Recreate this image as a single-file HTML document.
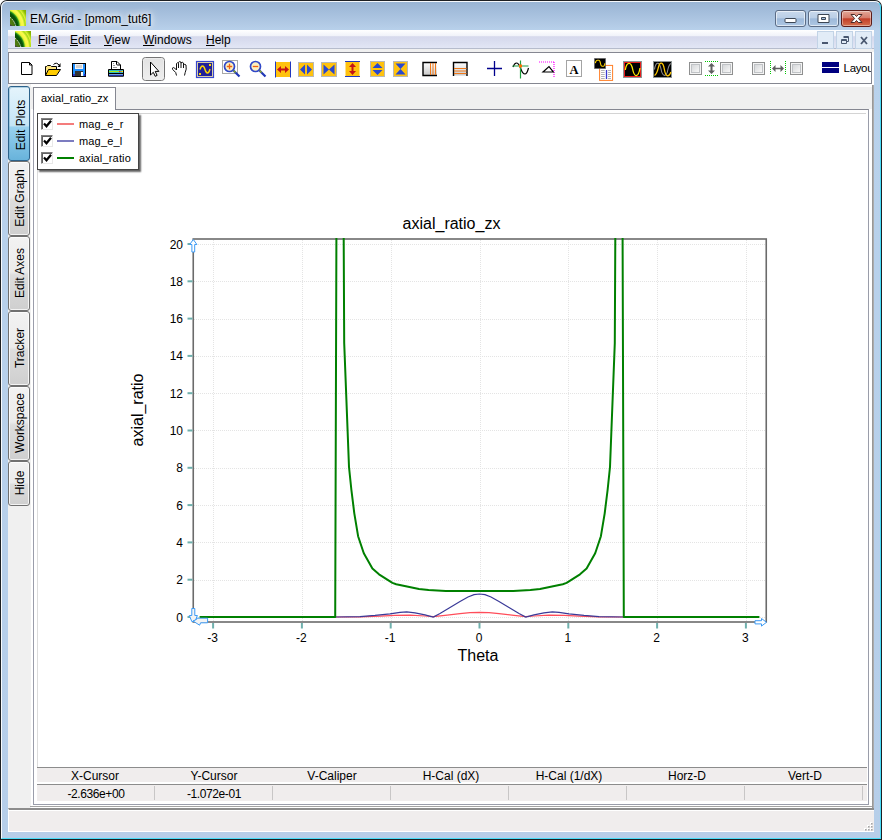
<!DOCTYPE html>
<html><head><meta charset="utf-8"><title>EM.Grid - [pmom_tut6]</title>
<style>
*{box-sizing:border-box;margin:0;padding:0}
html,body{width:882px;height:840px;overflow:hidden}
html{background:#fff}
body{position:relative;background:#fff;font-family:"Liberation Sans",sans-serif;font-size:12px;color:#000}
.abs{position:absolute}
#frame{left:0;top:0;width:882px;height:840px;border-radius:7px 7px 0 0;background:#1d2023}
#glass{left:1px;top:1px;width:880px;height:838px;border-radius:6px 6px 0 0;
 background:linear-gradient(180deg,#98b4d3 0px,#a3bddb 10px,#b3cbe6 24px,#b9d2ec 30px,#b6cee9 100%)}
#glow{left:1px;top:1px;width:880px;height:838px;border-radius:6px 6px 0 0;border:1px solid rgba(255,255,255,.9);border-top-color:rgba(255,255,255,.9);border-right-color:#48dcf8;border-bottom-color:#48dcf8}
#title{left:30px;top:12px;font-size:12px;line-height:15px;white-space:nowrap;text-shadow:0 0 5px #fff,0 0 9px #fff,0 0 12px #fff}
#menubar{left:8px;top:30px;width:866px;height:19px;border-bottom:1px solid #b6bccc;
 background:linear-gradient(180deg,#ffffff 0,#f0f2f9 33%,#d6d9ec 37%,#d9ddef 60%,#e2e6f5 100%)}
.mi{top:33px;font-size:12px;line-height:14px;white-space:nowrap}
#client{left:8px;top:49px;width:866px;height:783px;background:#fff}
#toolbar{left:8px;top:52px;width:864px;height:32px;background:#fff;border:1px solid #858791}
#tabstrip{left:31px;top:87px;width:841px;height:22px;background:#f0f0f0}
#sidestrip{left:8px;top:84px;width:23px;height:724px;background:#f0f0f0}
#rshadow{left:872px;top:85px;width:2px;height:747px;background:linear-gradient(90deg,#8f8f8f,#b4b4b4)}
#content{left:33px;top:109px;width:836px;height:696px;background:#fff;border:1px solid #9a9daa;border-top-color:#858791}
#inner{left:37px;top:113px;width:829px;height:655px;border-top:1px solid #d4d4d4;border-left:1px solid #dcdcdc}
#tab{left:33px;top:87px;width:83px;height:23px;background:#fff;border:1px solid #858791;border-bottom:none}
#tab span{position:absolute;left:7px;top:4px;font-size:11px;line-height:13px;white-space:nowrap}
.vt{left:8px;width:22px;border:1px solid #707070;border-radius:3px;background:linear-gradient(180deg,#f2f2f2 0,#ebebeb 48%,#dddddd 52%,#cfcfcf 100%);box-shadow:inset 0 0 0 1px rgba(255,255,255,.75)}
.vt.sel{border-color:#2c628b;background:linear-gradient(180deg,#e5f4fc 0,#c4e5f6 53%,#98d1ef 55%,#68b3db 100%);box-shadow:inset 1px 1px 0 0 rgba(120,170,200,.5)}
.vt.sel span{left:calc(50% + 1.5px);top:calc(50% + 1px)}
.vt span{position:absolute;left:calc(50% + .5px);top:calc(50% - 1px);font-size:12px;line-height:14px;white-space:nowrap;transform:translate(-50%,-50%) rotate(-90deg)}
#legend{left:37px;top:113px;width:102px;height:57px;background:#fff;border:1px solid #444;box-shadow:2px 2px 1.5px rgba(0,0,0,.6)}
.cb{left:41px;width:12px;height:12px;background:#fff;border:1px solid #808080;border-right-color:#e8e8e8;border-bottom-color:#e8e8e8;box-shadow:inset 1px 1px 0 #606060}
.ll{left:57px;width:17px;height:2px}
.lt{left:79px;font-size:11px;line-height:13px;white-space:nowrap;letter-spacing:.17px}
#hdr{left:37px;top:767px;width:830px;height:17px;border-top:1px solid #8c8c8c;background:linear-gradient(180deg,#f0eded 0,#f0eded 14px,#fff 14px)}
#vals{left:37px;top:784px;width:830px;height:17px;border-top:1px solid #8c8c8c;background:#f0eded}
.hc{top:769px;width:118px;text-align:center;font-size:12px;line-height:14px;white-space:nowrap}
.vc{top:787px;width:118px;text-align:center;font-size:12px;line-height:14px;white-space:nowrap;letter-spacing:-0.4px}
.sep{top:786px;width:1px;height:14px;background:#c8c6c6}
#status{left:8px;top:808px;width:866px;height:24px;background:#f0eded;border-top:2px solid #8c8c8c;border-left:1px solid #fff;border-bottom:1px solid #fff;box-shadow:inset 0 1px 0 #fff}
#stsh{left:30px;top:806px;width:842px;height:1px;background:#a4a4a4}
.cbtn{top:10px;height:17px;border:1px solid #5b6c86;border-radius:3px;box-shadow:inset 0 0 0 1px rgba(255,255,255,.6);
 background:linear-gradient(180deg,#c9d9ec 0,#bacee6 46%,#9db9da 52%,#aec7e3 100%)}
#bclose{background:linear-gradient(180deg,#e3a899 0,#d67c6b 46%,#c23e28 52%,#d4714f 100%);border-color:#5c1c19;box-shadow:inset 0 0 0 1px rgba(255,255,255,.4)}
.mbtn{top:31px;width:17px;height:18px;border:1px solid #c2d3e6;background:#e2ecf7}
</style></head><body>
<div id="frame" class="abs"></div>
<div id="glass" class="abs"></div>
<div id="glow" class="abs"></div>
<!--APPICON-->
<div id="title" class="abs">EM.Grid - [pmom_tut6]</div>
<div id="bmin" class="abs cbtn" style="left:775px;width:31px"></div>
<div id="bmax" class="abs cbtn" style="left:808px;width:31px"></div>
<div id="bclose" class="abs cbtn" style="left:841px;width:31px"></div>
<div id="menubar" class="abs"></div>
<div class="abs mi" style="left:38px"><u>F</u>ile</div>
<div class="abs mi" style="left:70px"><u>E</u>dit</div>
<div class="abs mi" style="left:104px"><u>V</u>iew</div>
<div class="abs mi" style="left:143px"><u>W</u>indows</div>
<div class="abs mi" style="left:206px"><u>H</u>elp</div>
<div class="abs mbtn" style="left:817px"></div>
<div class="abs mbtn" style="left:836px"></div>
<div class="abs mbtn" style="left:855px"></div>
<div id="client" class="abs"></div>
<div class="abs" style="left:8px;top:49px;width:866px;height:3px;background:#f0f0f0"></div>
<div id="sidestrip" class="abs"></div>
<div id="tabstrip" class="abs"></div>
<div id="toolbar" class="abs"></div>
<div id="rshadow" class="abs"></div>
<div id="content" class="abs"></div>
<div id="inner" class="abs"></div>
<div id="tab" class="abs"><span>axial_ratio_zx</span></div>
<div class="abs vt sel" style="top:86px;height:75px"><span>Edit Plots</span></div>
<div class="abs vt" style="top:161px;height:75px"><span>Edit Graph</span></div>
<div class="abs vt" style="top:236px;height:75px"><span>Edit Axes</span></div>
<div class="abs vt" style="top:311px;height:75px"><span>Tracker</span></div>
<div class="abs vt" style="top:386px;height:75px"><span>Workspace</span></div>
<div class="abs vt" style="top:461px;height:45px"><span>Hide</span></div>
<svg class="abs" style="left:0;top:0" width="882" height="840" viewBox="0 0 882 840" font-family="Liberation Sans, sans-serif">
<line x1="213.5" y1="240" x2="213.5" y2="621" stroke="#e4e4e4" stroke-width="1" stroke-dasharray="1 1"/>
<line x1="302.5" y1="240" x2="302.5" y2="621" stroke="#e4e4e4" stroke-width="1" stroke-dasharray="1 1"/>
<line x1="391.5" y1="240" x2="391.5" y2="621" stroke="#e4e4e4" stroke-width="1" stroke-dasharray="1 1"/>
<line x1="480.5" y1="240" x2="480.5" y2="621" stroke="#e4e4e4" stroke-width="1" stroke-dasharray="1 1"/>
<line x1="568.5" y1="240" x2="568.5" y2="621" stroke="#e4e4e4" stroke-width="1" stroke-dasharray="1 1"/>
<line x1="657.5" y1="240" x2="657.5" y2="621" stroke="#e4e4e4" stroke-width="1" stroke-dasharray="1 1"/>
<line x1="746.5" y1="240" x2="746.5" y2="621" stroke="#e4e4e4" stroke-width="1" stroke-dasharray="1 1"/>
<line x1="194" y1="617.5" x2="766" y2="617.5" stroke="#e4e4e4" stroke-width="1" stroke-dasharray="1 1"/>
<line x1="194" y1="580.5" x2="766" y2="580.5" stroke="#e4e4e4" stroke-width="1" stroke-dasharray="1 1"/>
<line x1="194" y1="542.5" x2="766" y2="542.5" stroke="#e4e4e4" stroke-width="1" stroke-dasharray="1 1"/>
<line x1="194" y1="505.5" x2="766" y2="505.5" stroke="#e4e4e4" stroke-width="1" stroke-dasharray="1 1"/>
<line x1="194" y1="468.5" x2="766" y2="468.5" stroke="#e4e4e4" stroke-width="1" stroke-dasharray="1 1"/>
<line x1="194" y1="430.5" x2="766" y2="430.5" stroke="#e4e4e4" stroke-width="1" stroke-dasharray="1 1"/>
<line x1="194" y1="393.5" x2="766" y2="393.5" stroke="#e4e4e4" stroke-width="1" stroke-dasharray="1 1"/>
<line x1="194" y1="356.5" x2="766" y2="356.5" stroke="#e4e4e4" stroke-width="1" stroke-dasharray="1 1"/>
<line x1="194" y1="319.5" x2="766" y2="319.5" stroke="#e4e4e4" stroke-width="1" stroke-dasharray="1 1"/>
<line x1="194" y1="281.5" x2="766" y2="281.5" stroke="#e4e4e4" stroke-width="1" stroke-dasharray="1 1"/>
<line x1="194" y1="244.5" x2="766" y2="244.5" stroke="#e4e4e4" stroke-width="1" stroke-dasharray="1 1"/>
<rect x="193.25" y="239" width="573" height="383" fill="none" stroke="#6b6b6b" stroke-width="1.6"/>
<line x1="187.5" y1="617.0" x2="192.5" y2="617.0" stroke="#6fb0ad" stroke-width="2"/>
<text x="183" y="621.5" font-size="12" text-anchor="end" fill="#000">0</text>
<line x1="187.5" y1="579.7" x2="192.5" y2="579.7" stroke="#6fb0ad" stroke-width="2"/>
<text x="183" y="584.2" font-size="12" text-anchor="end" fill="#000">2</text>
<line x1="187.5" y1="542.4" x2="192.5" y2="542.4" stroke="#6fb0ad" stroke-width="2"/>
<text x="183" y="546.9" font-size="12" text-anchor="end" fill="#000">4</text>
<line x1="187.5" y1="505.1" x2="192.5" y2="505.1" stroke="#6fb0ad" stroke-width="2"/>
<text x="183" y="509.6" font-size="12" text-anchor="end" fill="#000">6</text>
<line x1="187.5" y1="467.8" x2="192.5" y2="467.8" stroke="#6fb0ad" stroke-width="2"/>
<text x="183" y="472.3" font-size="12" text-anchor="end" fill="#000">8</text>
<line x1="187.5" y1="430.5" x2="192.5" y2="430.5" stroke="#6fb0ad" stroke-width="2"/>
<text x="183" y="435.0" font-size="12" text-anchor="end" fill="#000">10</text>
<line x1="187.5" y1="393.2" x2="192.5" y2="393.2" stroke="#6fb0ad" stroke-width="2"/>
<text x="183" y="397.7" font-size="12" text-anchor="end" fill="#000">12</text>
<line x1="187.5" y1="355.9" x2="192.5" y2="355.9" stroke="#6fb0ad" stroke-width="2"/>
<text x="183" y="360.4" font-size="12" text-anchor="end" fill="#000">14</text>
<line x1="187.5" y1="318.6" x2="192.5" y2="318.6" stroke="#6fb0ad" stroke-width="2"/>
<text x="183" y="323.1" font-size="12" text-anchor="end" fill="#000">16</text>
<line x1="187.5" y1="281.3" x2="192.5" y2="281.3" stroke="#6fb0ad" stroke-width="2"/>
<text x="183" y="285.8" font-size="12" text-anchor="end" fill="#000">18</text>
<line x1="187.5" y1="244.0" x2="192.5" y2="244.0" stroke="#6fb0ad" stroke-width="2"/>
<text x="183" y="248.5" font-size="12" text-anchor="end" fill="#000">20</text>
<line x1="213.1" y1="623" x2="213.1" y2="628.5" stroke="#6fb0ad" stroke-width="2"/>
<text x="212.6" y="642" font-size="12" text-anchor="middle" fill="#000">-3</text>
<line x1="301.9" y1="623" x2="301.9" y2="628.5" stroke="#6fb0ad" stroke-width="2"/>
<text x="301.4" y="642" font-size="12" text-anchor="middle" fill="#000">-2</text>
<line x1="390.7" y1="623" x2="390.7" y2="628.5" stroke="#6fb0ad" stroke-width="2"/>
<text x="390.2" y="642" font-size="12" text-anchor="middle" fill="#000">-1</text>
<line x1="479.5" y1="623" x2="479.5" y2="628.5" stroke="#6fb0ad" stroke-width="2"/>
<text x="479.0" y="642" font-size="12" text-anchor="middle" fill="#000">0</text>
<line x1="568.3" y1="623" x2="568.3" y2="628.5" stroke="#6fb0ad" stroke-width="2"/>
<text x="567.8" y="642" font-size="12" text-anchor="middle" fill="#000">1</text>
<line x1="657.1" y1="623" x2="657.1" y2="628.5" stroke="#6fb0ad" stroke-width="2"/>
<text x="656.6" y="642" font-size="12" text-anchor="middle" fill="#000">2</text>
<line x1="745.9" y1="623" x2="745.9" y2="628.5" stroke="#6fb0ad" stroke-width="2"/>
<text x="745.4" y="642" font-size="12" text-anchor="middle" fill="#000">3</text>
<polyline points="335.2,617.0 360.0,616.9 380.0,616.2 395.0,615.4 410.0,615.2 425.0,616.0 433.3,616.7 445.0,615.3 460.0,613.6 470.0,612.7 479.5,612.4 489.0,612.7 499.0,613.6 514.0,615.3 525.7,616.7 534.0,616.0 549.0,615.2 564.0,615.4 579.0,616.2 599.0,616.9 623.8,617.0" fill="none" stroke="#ff4d5a" stroke-width="1.2"/>
<polyline points="335.2,617.0 360.0,616.6 375.0,615.4 390.0,613.8 400.0,612.4 406.7,611.8 415.0,612.8 425.0,614.8 433.3,617.0 440.0,613.5 450.0,607.5 460.0,601.5 468.0,597.0 474.0,594.6 479.5,594.0 485.0,594.6 491.0,597.0 499.0,601.5 509.0,607.5 519.0,613.5 525.7,617.0 534.0,614.8 544.0,612.8 552.3,611.8 559.0,612.4 569.0,613.8 584.0,615.4 599.0,616.6 623.8,617.0" fill="none" stroke="#3a3a98" stroke-width="1.2"/>
<polyline points="200.6,617.0 335.2,617.0 336.4,239.0" fill="none" stroke="#008000" stroke-width="2" stroke-linejoin="round" stroke-linecap="square"/>
<polyline points="343.7,239.0 344.2,343.0 349.0,467.0 351.4,490.0 354.3,513.3 358.1,536.2 363.8,553.3 372.4,568.6 379.0,574.3 392.4,582.9 396.2,584.2 419.0,589.0 428.6,590.1 445.7,591.0 479.5,591.0 513.3,591.0 530.4,590.1 540.0,589.0 562.8,584.2 566.6,582.9 580.0,574.3 586.6,568.6 595.2,553.3 600.9,536.2 604.7,513.3 607.6,490.0 610.0,467.0 614.8,343.0 615.3,239.0" fill="none" stroke="#008000" stroke-width="2" stroke-linejoin="round" stroke-linecap="square"/>
<polyline points="622.6,239.0 623.8,617.0 758.4,617.0" fill="none" stroke="#008000" stroke-width="2" stroke-linejoin="round" stroke-linecap="square"/>
<path d="M193.3 239.5 l-3.6 5 h2.2 v7.5 h2.8 v-7.5 h2.2 z" fill="#fff" stroke="#3d9bf5" stroke-width="1"/>
<path d="M191.8 608.5 h3 v7 h2.6 l-2 5 -3.5 1.2 -2.6 -6.2 h2.5 z" fill="#f4f4f4" stroke="#3d9bf5" stroke-width="1"/>
<path d="M193 621 l3.6 -1.6 v-1.2 h11 v4.6 h-7 l-1 2.4 z" fill="#f4f4f4" stroke="#3d9bf5" stroke-width="1"/>
<path d="M766.5 622.3 l-5 -3.8 v2.2 h-6.5 v3.2 h6.5 v2.2 z" fill="#fff" stroke="#3d9bf5" stroke-width="1"/>
<text x="451.5" y="229" font-size="16" text-anchor="middle" fill="#000">axial_ratio_zx</text>
<text x="478" y="661" font-size="16" text-anchor="middle" fill="#000">Theta</text>
<text transform="translate(143,410) rotate(-90)" font-size="16" text-anchor="middle" fill="#000">axial_ratio</text>
</svg>
<div id="legend" class="abs"></div>
<div class="abs cb" style="top:118px"></div><div class="abs cb" style="top:135px"></div><div class="abs cb" style="top:152px"></div>
<div class="abs ll" style="top:123px;background:#f47c7c"></div>
<div class="abs ll" style="top:140px;background:#7c7cc0"></div>
<div class="abs ll" style="top:157px;background:#008000"></div>
<div class="abs lt" style="top:118px">mag_e_r</div>
<div class="abs lt" style="top:135px">mag_e_l</div>
<div class="abs lt" style="top:152px">axial_ratio</div>
<div id="hdr" class="abs"></div>
<div id="vals" class="abs"></div>
<div class="abs hc" style="left:36px">X-Cursor</div>
<div class="abs hc" style="left:155px">Y-Cursor</div>
<div class="abs hc" style="left:273px">V-Caliper</div>
<div class="abs hc" style="left:392px">H-Cal (dX)</div>
<div class="abs hc" style="left:510px">H-Cal (1/dX)</div>
<div class="abs hc" style="left:628px">Horz-D</div>
<div class="abs hc" style="left:746px">Vert-D</div>
<div class="abs vc" style="left:37px">-2.636e+00</div>
<div class="abs vc" style="left:155px">-1.072e-01</div>
<div class="abs sep" style="left:154px"></div><div class="abs sep" style="left:272px"></div><div class="abs sep" style="left:390px"></div><div class="abs sep" style="left:508px"></div><div class="abs sep" style="left:626px"></div><div class="abs sep" style="left:744px"></div><div class="abs sep" style="left:862px"></div>
<div id="stsh" class="abs"></div>
<div id="status" class="abs"></div>
<svg class="abs" style="left:0;top:0" width="882" height="840" viewBox="0 0 882 840" font-family="Liberation Sans, sans-serif">
<defs>
<radialGradient id="leaf" gradientUnits="userSpaceOnUse" cx="-7.600" cy="16.600" r="30">
<stop offset="0.000" stop-color="#6a9418"/><stop offset="0.333" stop-color="#4e7a10"/><stop offset="0.400" stop-color="#46740e"/><stop offset="0.440" stop-color="#0a4c0a"/><stop offset="0.517" stop-color="#0a560a"/><stop offset="0.560" stop-color="#2e9a1c"/><stop offset="0.593" stop-color="#c8e830"/><stop offset="0.627" stop-color="#f6f640"/><stop offset="0.700" stop-color="#fafa50"/><stop offset="0.740" stop-color="#c0e428"/><stop offset="0.767" stop-color="#a8dc18"/><stop offset="0.800" stop-color="#e0ee38"/><stop offset="0.833" stop-color="#b8e020"/><stop offset="0.883" stop-color="#8cbc04"/><stop offset="1.000" stop-color="#78a400"/>
</radialGradient>
<g id="appicon"><rect width="16" height="16" fill="url(#leaf)"/><path d="M0 7.300 Q4.200 10.500 5.800 16" fill="none" stroke="#fff" stroke-width="1" stroke-dasharray="1.300 1"/><path d="M0 14 L3 16 H0z" fill="#4a3c50" opacity=".85"/></g>
<linearGradient id="cbg" x1="0" y1="0" x2="1" y2="1"><stop offset="0" stop-color="#d4d6d8"/><stop offset=".5" stop-color="#e6e7e8"/><stop offset="1" stop-color="#fafafa"/></linearGradient>
<g id="wcb"><rect x=".5" y=".5" width="12" height="12" fill="#f4f4f4" stroke="#8e8f8f"/><rect x="2.5" y="2.5" width="8" height="8" fill="url(#cbg)" stroke="#c0c3c6"/></g>
<linearGradient id="gg" x1="0" y1="0" x2="0" y2="1"><stop offset="0" stop-color="#fff"/><stop offset="1" stop-color="#c8c8c8"/></linearGradient>
<linearGradient id="pb" x1="0" y1="0" x2="0" y2="1"><stop offset="0" stop-color="#e2e2e2"/><stop offset="1" stop-color="#efefef"/></linearGradient>
</defs>
<!-- app icons -->
<use href="#appicon" x="10" y="10"/>
<use href="#appicon" x="15" y="31"/>
<!-- caption glyphs -->
<rect x="785" y="18.5" width="11" height="4" rx="1" fill="#fff" stroke="#3c4654" stroke-width="1"/>
<path d="M818 14.5 h11 v8 h-11z M821.5 17.5 v2 h4 v-2z" fill="#fff" fill-rule="evenodd" stroke="#3c4654" stroke-width="1"/>
<path d="M851 14.500 h3.700 l1.800 2 1.800-2 h3.700 l-3.600 4 3.600 4 h-3.700 l-1.800-2 -1.800 2 h-3.700 l3.600-4z" fill="#fff" stroke="#4a2a26" stroke-width="1" stroke-linejoin="round"/>
<!-- mdi glyphs -->
<rect x="822" y="42" width="6" height="2" fill="#4a5870"/>
<path d="M843.5 36.5 h5 v5 h-2 M843.5 37.5 h5" fill="none" stroke="#4a5870" stroke-width="1"/>
<path d="M841.5 39.5 h5 v4 h-5z M841.5 40.5 h5" fill="#e2ecf7" stroke="#4a5870" stroke-width="1"/>
<path d="M861 37 l6 7 M867 37 l-6 7" stroke="#4a5870" stroke-width="1.8" fill="none"/>
<!-- New -->
<path d="M21.5 62.5 h8 l2.500 2.500 v9.500 h-10.500z" fill="#fff" stroke="#000" stroke-width="1"/>
<path d="M29.500 62.500 v2.500 h2.500" fill="none" stroke="#000" stroke-width="1"/>
<!-- Open -->
<path d="M45.5 75.5 v-9 h1 l1-1 h3 l1 1 h5 v3" fill="#ffe680" stroke="#000" stroke-width="1"/>
<path d="M45.5 75.5 l3-6 h12 l-4 6z" fill="#ffcc00" stroke="#000" stroke-width="1" stroke-linejoin="round"/>
<path d="M53.5 64.5 q3-3 6 1" fill="none" stroke="#000" stroke-width="1"/>
<path d="M60.5 63 v4 h-3z" fill="#000"/>
<!-- Save -->
<rect x="72.500" y="63.500" width="13" height="13" fill="#1e8fff" stroke="#000" stroke-width="1"/>
<rect x="75" y="64" width="8" height="5" fill="#f4f4f4"/><rect x="76" y="65" width="6" height="3" fill="#d0d0d0"/>
<rect x="75" y="71" width="8" height="5" fill="#333"/><rect x="81" y="72" width="2" height="4" fill="#fff"/>
<rect x="73" y="74" width="2" height="2" fill="#3030c0"/><rect x="84" y="74" width="1.500" height="2" fill="#3030c0"/>
<!-- Print -->
<path d="M111.500 69.500 v-8 h5.500 l3.500 3.500 v4.500z" fill="#fff" stroke="#000" stroke-width="1"/>
<path d="M116.500 61.500 v2.500 q0 1 1 1 h3" fill="none" stroke="#000" stroke-width="1"/>
<path d="M113 63.500 h1 M113 65.500 h2 M113 67.500 h4" stroke="#999" stroke-width="1"/>
<rect x="108" y="69" width="16" height="7.800" rx="1" fill="#000"/>
<rect x="109" y="70" width="14" height="3" fill="#10b0f0"/><rect x="109" y="70.800" width="10" height="1.400" fill="#a8e818"/><rect x="119" y="70.800" width="1.500" height="1.400" fill="#f02020"/><rect x="120.500" y="70.800" width="1.300" height="1.400" fill="#ff9000"/><rect x="121.800" y="70.800" width="1.200" height="1.400" fill="#f8f000"/>
<rect x="109" y="74" width="14" height="1" fill="#70a0e0"/><rect x="109" y="75" width="14" height="1" fill="#2030a8"/>
<!-- Pointer button -->
<rect x="142.500" y="57.500" width="22" height="23" rx="3" fill="url(#pb)" stroke="#757575" stroke-width="1"/>
<rect x="143.500" y="58.500" width="20" height="21" rx="2" fill="none" stroke="#f0f0f0" stroke-width="1" opacity=".7"/>
<path d="M150.500 62 v13 l2.800-2.700 1.900 4 1.900-.9 -1.900-4 h3.700z" fill="#fff" stroke="#000" stroke-width="1" stroke-linejoin="miter"/>
<!-- Hand -->
<path d="M176.500 75.500 L175.700 72.500 L172.700 69.500 Q171.800 67.700 173.300 67.500 Q174.500 67.500 176.500 70 V63.500 Q177.500 62 178.500 63.500 V62.300 Q179.750 60.700 181 62.300 V63 Q182.250 61.500 183.500 63 V65 Q184.750 63.600 186 65 Q186.800 69.500 185.200 72.500 L184.500 75.500" fill="#fff" stroke="#111" stroke-width="1" stroke-linejoin="round"/>
<path d="M178.500 63.500 V68 M181 62.300 V68 M183.500 63 V68" fill="none" stroke="#111" stroke-width="1"/>
<!-- Plot icon -->
<rect x="196.500" y="61.500" width="17" height="16" fill="#e8dca0" stroke="#3848d0" stroke-width="1.200"/>
<rect x="198" y="63" width="14" height="13" fill="#20209a"/>
<path d="M200 69.500 q1-3.500 2.500-3.500 q1.500 0 2.500 3.500 q1 3.500 2.500 3.500 q1.500 0 2.500-4" fill="none" stroke="#ffd800" stroke-width="1.400"/>
<rect x="199" y="73" width="2" height="2" fill="#ffd800"/><rect x="209" y="64" width="2" height="2" fill="#ffd800"/>
<!-- Zoom in -->
<rect x="222.500" y="60.500" width="15" height="13" fill="#fff" stroke="#a8a8a8" stroke-width="1"/>
<path d="M233.500 70.500 l6 6" stroke="#2038b8" stroke-width="2.200"/><path d="M233 70 l2.500 2.500" stroke="#90b020" stroke-width="1.400"/>
<circle cx="229.500" cy="66.500" r="5" fill="#fdf0c0" stroke="#3048c8" stroke-width="1.700"/>
<path d="M226.800 66.500 h5.400 M229.500 63.800 v5.400" stroke="#f06010" stroke-width="1.300"/>
<!-- Zoom out -->
<path d="M259.500 70.500 l6 6" stroke="#2038b8" stroke-width="2.200"/><path d="M259 70 l2.500 2.500" stroke="#90b020" stroke-width="1.400"/>
<circle cx="255.500" cy="66.500" r="5" fill="#fdf0c0" stroke="#3048c8" stroke-width="1.700"/>
<path d="M252.800 66.500 h5.400" stroke="#f06010" stroke-width="1.300"/>
<!-- h expand -->
<rect x="275" y="62" width="16" height="15" fill="#ffc20e"/>
<path d="M275.500 61.500 v16 M290.500 61.500 v16" stroke="#2038c0" stroke-width="1"/>
<path d="M277 69.500 l4-3.500 v2.500 h4 v-2.500 l4 3.500 -4 3.500 v-2.500 h-4 v2.500z" fill="#c41414"/>
<!-- h arrows -->
<rect x="298.500" y="62.500" width="15" height="14" fill="#ffc20e" stroke="#b8b8b8" stroke-width="1"/>
<path d="M300 69.500 l5-5 v10z M312 69.500 l-5-5 v10z" fill="#2848d0"/>
<!-- bowtie -->
<rect x="321.500" y="62.500" width="15" height="14" fill="#ffc20e" stroke="#b8b8b8" stroke-width="1"/>
<path d="M323.500 64.500 l5.500 5 -5.500 5z M334.500 64.500 l-5.500 5 5.500 5z" fill="#2848d0"/>
<!-- v expand -->
<rect x="345.500" y="61.500" width="14" height="15" fill="#ffc20e"/>
<path d="M345 61.500 h15 M345 76.500 h15" stroke="#2038c0" stroke-width="1"/>
<path d="M352.500 63 l3.500 4 h-2.500 v4 h2.500 l-3.500 4 -3.500-4 h2.500 v-4 h-2.500z" fill="#c41414"/>
<!-- v arrows -->
<rect x="370.500" y="61.500" width="14" height="15" fill="#ffc20e" stroke="#b8b8b8" stroke-width="1"/>
<path d="M377.500 63 l5 5 h-10z M377.500 75 l5-5 h-10z" fill="#2848d0"/>
<!-- hourglass -->
<rect x="393.500" y="61.500" width="14" height="15" fill="#ffc20e" stroke="#b8b8b8" stroke-width="1"/>
<path d="M395.500 63.500 h10 l-5 5.500z M395.500 74.500 h10 l-5-5.500z" fill="#2848d0"/>
<!-- v lines -->
<rect x="423" y="62.500" width="14" height="13" fill="url(#gg)"/>
<path d="M437 62.500 h-14 v13 h14" fill="none" stroke="#000" stroke-width="1.400"/>
<path d="M430.500 63 v12 M433 63 v12 M435.500 63 v12" stroke="#f07818" stroke-width="1"/>
<!-- h lines -->
<rect x="453.500" y="62.500" width="13.500" height="13" fill="url(#gg)"/>
<path d="M453.500 76 v-13.500 h13.500 v13.500" fill="none" stroke="#000" stroke-width="1.400"/>
<path d="M454 68.500 h12.500 M454 71 h12.500 M454 73.500 h12.500" stroke="#f07818" stroke-width="1"/>
<!-- plus -->
<path d="M487 68.500 h15 M494.500 61 v15" stroke="#00008c" stroke-width="1.300"/>
<!-- curve crosshair -->
<path d="M513 67 q1.500-4 3.500-4 q2 0 4 5 q2 6 4.500 6 q2 0 3.500-6" fill="none" stroke="#000" stroke-width="1.200"/>
<path d="M520.500 60.500 v18 M512.500 66 h16" stroke="#20a040" stroke-width="1.200"/>
<rect x="519" y="64.500" width="3" height="3" fill="#ff7000"/>
<!-- dotted triangle -->
<path d="M539 62 h15 M554 62 v15" stroke="#ff00ff" stroke-width="1.200" stroke-dasharray="1 1" fill="none"/>
<path d="M543 72 h10.300 l-4.300-5.400z" fill="#fff" stroke="#000" stroke-width="1.200" stroke-linejoin="miter"/>
<!-- A -->
<rect x="566.500" y="60.500" width="15" height="16" fill="#fff" stroke="#a4a4a4" stroke-width="1"/>
<text x="574" y="73.500" font-family="Liberation Serif, serif" font-weight="bold" font-size="12.500" text-anchor="middle" fill="#000">A</text>
<!-- sheet icon -->
<rect x="599.600" y="65.400" width="13" height="15" fill="#fff" stroke="#ff7f27" stroke-width="1"/>
<path d="M601 70.500 h3.700 M601 72.500 h3.700 M601 74.500 h3.700 M601 76.500 h3.700 M601 78.500 h3.700 M608 70.500 h3 M608 72.500 h3 M608 74.500 h3 M608 76.500 h3 M608 78.500 h3" stroke="#b4b4b4" stroke-width="1"/>
<path d="M606.500 70 v9" stroke="#3838d0" stroke-width="1.300"/>
<rect x="594.300" y="58.300" width="11.400" height="10.400" fill="#000" stroke="#888" stroke-width=".5"/>
<path d="M595.300 63.200 q.7-2.900 2.200-2.900 h1.300 q1.200 0 1.700 3.200 q.5 2.800 1.700 2.800 h1.200 q1.100 0 1.500-3" fill="none" stroke="#ffd400" stroke-width="1.100"/>
<!-- red sine -->
<rect x="623.500" y="61.500" width="18" height="16" fill="#000" stroke="#8c9494" stroke-width="1"/>
<rect x="624.500" y="62.500" width="16" height="14" fill="none" stroke="#e81c1c" stroke-width="1"/>
<path d="M625.300 70 C626.500 62 631 60.500 632.700 69.500 C634.500 78 638.500 77.500 640 68" fill="none" stroke="#ffe800" stroke-width="1.300"/>
<!-- double sine -->
<rect x="653.500" y="61.500" width="18" height="16" fill="#000" stroke="#8c9494" stroke-width="1"/>
<path d="M654.500 69.500 C655.500 62 659.500 60.500 661 69 C662.500 77 666.500 78 668 69 C668.800 65.500 669.800 64 671 63.500" fill="none" stroke="#8c8c8c" stroke-width="1.100"/>
<path d="M654.500 75.500 C657 74 657.500 71 658.500 67 C659.800 61.500 663 61.500 664.300 69 C665.800 78 669 77 671 72" fill="none" stroke="#ffc800" stroke-width="1.300"/>
<!-- checkboxes -->
<use href="#wcb" x="689" y="62"/><use href="#wcb" x="720" y="62"/><use href="#wcb" x="752" y="62"/><use href="#wcb" x="790" y="62"/>
<path d="M705 61.500 h13 M705 75.500 h13" stroke="#00c800" stroke-width="1" stroke-dasharray="1 1"/>
<path d="M711.500 63 l3.500 3.500 h-2.500 v4 h2.500 l-3.500 3.500 -3.500-3.500 h2.500 v-4 h-2.500z" fill="#606060"/>
<path d="M770.500 61 v13 M785.500 61 v13" stroke="#00c800" stroke-width="1" stroke-dasharray="1 1"/>
<path d="M772 68.500 l3.500-3.500 v2.700 h5 v-2.700 l3.500 3.500 -3.500 3.500 v-2.700 h-5 v2.700z" fill="#606060"/>
<!-- layout -->
<rect x="822" y="62" width="17" height="5" fill="#000080"/><rect x="822" y="68" width="17" height="5" fill="#000080"/>
<svg x="840" y="58" width="31" height="20" viewBox="0 0 31 20"><text x="3.600" y="13.600" font-size="11.500" letter-spacing="-.35" fill="#000">Layout</text></svg>
<!-- status gripper -->
<g><rect x="870" y="822" width="2" height="2" fill="#fff"/><rect x="871" y="823" width="1.600" height="1.600" fill="#a6a6a6"/><rect x="867" y="825" width="2" height="2" fill="#fff"/><rect x="868" y="826" width="1.600" height="1.600" fill="#a6a6a6"/><rect x="870" y="825" width="2" height="2" fill="#fff"/><rect x="871" y="826" width="1.600" height="1.600" fill="#a6a6a6"/><rect x="864" y="828" width="2" height="2" fill="#fff"/><rect x="865" y="829" width="1.600" height="1.600" fill="#a6a6a6"/><rect x="867" y="828" width="2" height="2" fill="#fff"/><rect x="868" y="829" width="1.600" height="1.600" fill="#a6a6a6"/><rect x="870" y="828" width="2" height="2" fill="#fff"/><rect x="871" y="829" width="1.600" height="1.600" fill="#a6a6a6"/></g>
<!-- legend check marks -->
<g fill="none" stroke="#000" stroke-width="2.200"><path d="M44 123.500 l2.500 2.800 4.500-5.600"/><path d="M44 140.500 l2.500 2.800 4.500-5.600"/><path d="M44 157.500 l2.500 2.800 4.500-5.600"/></g>
</svg>

</body></html>
